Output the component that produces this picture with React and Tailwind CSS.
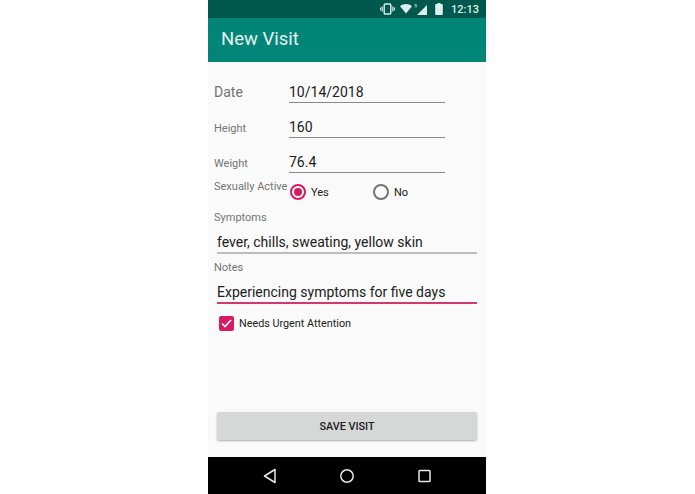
function StatusIcons() {
  return (
    <div className="flex items-center text-[#dcefec]">
      {/* vibrate */}
      <svg width="15" height="12" viewBox="0 0 15 12" fill="none" className="mr-[5px]">
        <rect x="4.2" y="1" width="6.6" height="10" rx="1" stroke="currentColor" strokeWidth="1.4" />
        <path d="M2.2 3.5v5M0.6 4.5v3M12.8 3.5v5M14.4 4.5v3" stroke="currentColor" strokeWidth="1.1" />
      </svg>
      {/* wifi */}
      <svg width="12" height="10" viewBox="0 0 12 10" className="mr-[2px]">
        <path d="M0 2.2C3.4-.6 8.6-.6 12 2.2L6 9.6z" fill="currentColor" />
      </svg>
      {/* signal with roaming mark */}
      <svg width="14" height="11" viewBox="0 0 14 11" className="mr-[7px]">
        <path d="M13 1v10H3z" fill="currentColor" />
        <path d="M0.6 0.5h1.6c.8 0 .8 1.4 0 1.5l.8 1.4M1.2 0.5v3" stroke="currentColor" strokeWidth="0.6" fill="none" />
      </svg>
      {/* battery */}
      <svg width="8" height="12" viewBox="0 0 8 12" className="mr-[8px]">
        <path d="M2.5 0h3v1H7a1 1 0 0 1 .8 1v9a1 1 0 0 1-.8 1H1a1 1 0 0 1-.8-1V2A1 1 0 0 1 1 1h1.5z" fill="currentColor" />
      </svg>
      <span className="text-[11px] font-medium leading-none">12:13</span>
    </div>
  );
}

function FieldRow({ label, value, labelClass, height }) {
  return (
    <div className={`flex ${height}`}>
      <div className={`w-[81px] pl-[6px] text-[#757575] ${labelClass}`}>{label}</div>
      <div className="w-[156px] h-full flex items-end border-b border-[#8a8a8a] pb-[3px] text-[14px] leading-[14px] text-[#212121]">
        {value}
      </div>
    </div>
  );
}

function Radio({ checked, label, className }) {
  return (
    <div className={`flex items-center ${className}`}>
      <div className={`w-[16px] h-[16px] rounded-full border-2 flex items-center justify-center ${checked ? "border-[#d81b60]" : "border-[#757575]"}`}>
        {checked && <div className="w-[8px] h-[8px] rounded-full bg-[#d81b60]" />}
      </div>
      <span className="ml-[5px] pt-[2px] text-[11px] text-[#212121]">{label}</span>
    </div>
  );
}

function App() {
  return (
    <div className="w-[695px] h-[494px] bg-white pl-[208px] font-['Roboto',sans-serif]">
      <div className="w-[278px] h-full flex flex-col">
        <div className="h-[18px] bg-[#00574b] flex items-center justify-end pr-[7px]">
          <StatusIcons />
        </div>
        <div className="h-[44px] bg-[#008577] flex items-center pl-[13px] text-[18.5px] text-[#e6f4f1]">
          New Visit
        </div>

        <div className="flex-1 bg-[#fafafa] flex flex-col pt-[19px]">
          <FieldRow label="Date" value="10/14/2018" height="h-[22px]" labelClass="text-[14px] leading-[22px]" />
          <div className="h-[12px]" />
          <FieldRow label="Height" value="160" height="h-[23px]" labelClass="text-[11px] leading-[27px]" />
          <div className="h-[12px]" />
          <FieldRow label="Weight" value="76.4" height="h-[23px]" labelClass="text-[11px] leading-[28px]" />

          <div className="flex h-[30px]">
            <div className="w-[82px] pl-[6px] pt-[7px] text-[11px] leading-[14px] text-[#757575] whitespace-nowrap">
              Sexually Active
            </div>
            <div className="flex items-start pt-[10px]">
              <Radio checked label="Yes" className="w-[83px]" />
              <Radio label="No" />
            </div>
          </div>

          <div className="pl-[6px] pt-[8px] text-[11px] leading-[14px] text-[#757575]">Symptoms</div>
          <div className="ml-[9px] w-[260px] h-[29px] flex items-end border-b-2 border-[#bdbdbd] pb-[3px] text-[14px] leading-[14px] text-[#212121]">
            fever, chills, sweating, yellow skin
          </div>

          <div className="pl-[6px] pt-[7px] text-[11px] leading-[14px] text-[#757575]">Notes</div>
          <div className="ml-[9px] w-[260px] h-[29px] flex items-end border-b-2 border-[#d0396f] pb-[3px] text-[14px] leading-[14px] text-[#212121]">
            Experiencing symptoms for five days
          </div>

          <div className="flex items-center ml-[11px] mt-[10px]">
            <div className="w-[15px] h-[15px] rounded-[2px] bg-[#d81b60] flex items-center justify-center">
              <svg width="11" height="9" viewBox="0 0 11 9" fill="none">
                <path d="M1 4.5l3 3L10 1" stroke="#fff" strokeWidth="1.6" />
              </svg>
            </div>
            <span className="ml-[5px] pt-[2px] text-[10.8px] text-[#212121]">Needs Urgent Attention</span>
          </div>

          <button className="mt-auto mb-[17px] ml-[9px] w-[260px] h-[28px] pt-[2px] bg-[#d6d7d7] rounded-[2px] shadow-[0_1px_2px_rgba(0,0,0,0.3)] text-[10.8px] font-medium text-[#212121]">
            SAVE VISIT
          </button>
        </div>

        <div className="h-[37px] bg-black flex items-center">
          <svg width="278" height="37" viewBox="0 0 278 37" fill="none" stroke="#e8e8e8" strokeWidth="1.5">
            <path d="M67 12.5v13L56.5 19z" strokeLinejoin="round" />
            <circle cx="139" cy="19" r="6.2" />
            <rect x="211" y="13.5" width="11" height="11" rx="0.8" />
          </svg>
        </div>
      </div>
    </div>
  );
}

export default App;
